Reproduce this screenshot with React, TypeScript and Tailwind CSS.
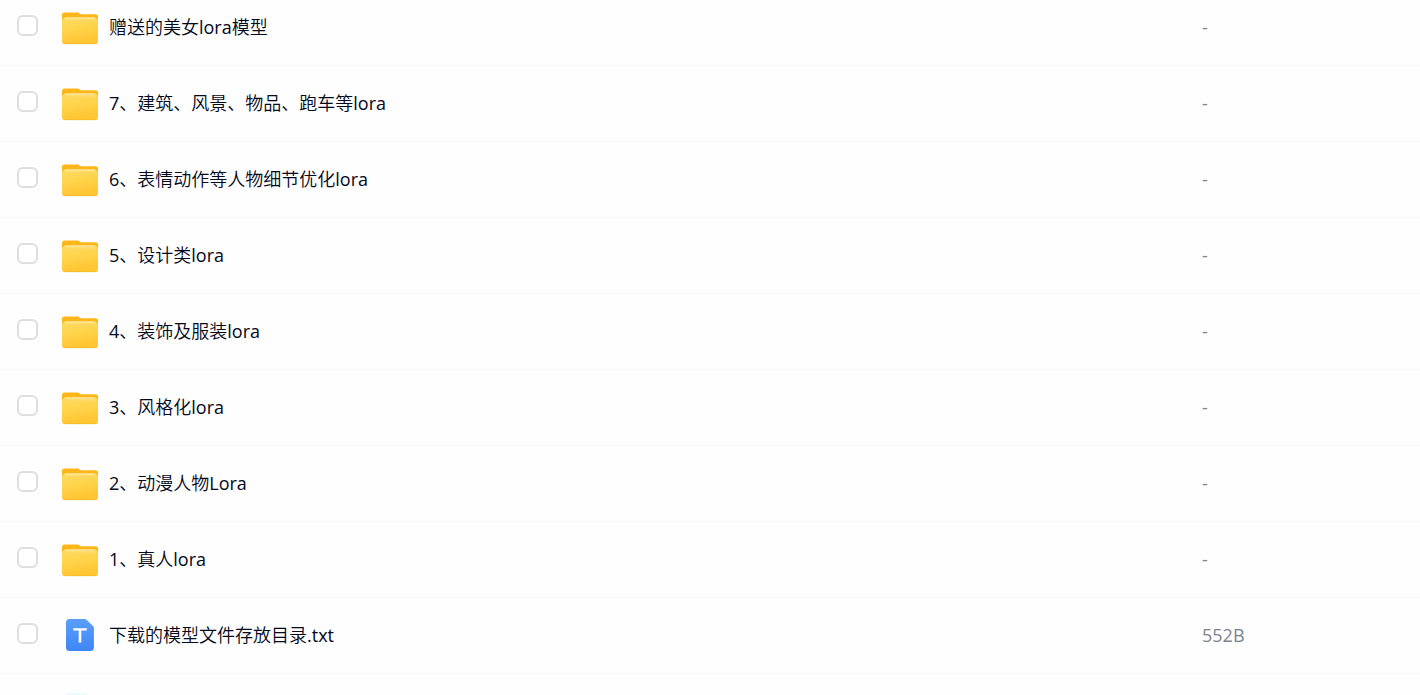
import React from "react";

type Kind = "folder" | "text" | "other";

interface Entry {
  id: string;
  name: string;
  size: string;
  kind: Kind;
}

const entries: Entry[] = [
  { id: "gift", name: "赠送的美女lora模型", size: "-", kind: "folder" },
  { id: "f7", name: "7、建筑、风景、物品、跑车等lora", size: "-", kind: "folder" },
  { id: "f6", name: "6、表情动作等人物细节优化lora", size: "-", kind: "folder" },
  { id: "f5", name: "5、设计类lora", size: "-", kind: "folder" },
  { id: "f4", name: "4、装饰及服装lora", size: "-", kind: "folder" },
  { id: "f3", name: "3、风格化lora", size: "-", kind: "folder" },
  { id: "f2", name: "2、动漫人物Lora", size: "-", kind: "folder" },
  { id: "f1", name: "1、真人lora", size: "-", kind: "folder" },
  { id: "txt", name: "下载的模型文件存放目录.txt", size: "552B", kind: "text" },
];

function FolderIcon() {
  return (
    <svg viewBox="0 0 40 40" className="size-10 shrink-0" aria-hidden="true">
      <defs>
        <linearGradient id="folder-front" x1="0" y1="0" x2="0.25" y2="1">
          <stop offset="0" stopColor="#ffdc62" />
          <stop offset="0.5" stopColor="#ffd34a" />
          <stop offset="1" stopColor="#fec532" />
        </linearGradient>
        <linearGradient id="folder-shine" x1="0" y1="0" x2="0" y2="1">
          <stop offset="0" stopColor="#ffe9a8" />
          <stop offset="1" stopColor="#ffdc62" stopOpacity="0" />
        </linearGradient>
      </defs>
      <path
        d="M2 7a2.500 2.500 0 0 1 2.500-2.500h13c.8 0 1.300.200 1.900.700l1.300 1h14.800A2.500 2.500 0 0 1 38 8.700V18H2z"
        fill="#fcb61a"
      />
      <path
        d="M2 14.500c0-3.600 1.600-5.200 4.600-5.200h26.800c3 0 4.600 1.600 4.600 5.200V33a3 3 0 0 1-3 3H5a3 3 0 0 1-3-3z"
        fill="url(#folder-front)"
      />
      <path
        d="M3.500 13.500c0-2.700 1.300-4 3.600-4h25.800c2.300 0 3.600 1.300 3.600 4z"
        fill="url(#folder-shine)"
      />
      <path d="M3 34.700c.6.800 1.200 1 2 1h30c.8 0 1.400-.2 2-1" fill="none" stroke="#f9b62b" strokeWidth="0.700" />
    </svg>
  );
}

function TextFileIcon() {
  return (
    <svg viewBox="0 0 40 40" className="size-10 shrink-0" aria-hidden="true">
      <defs>
        <linearGradient id="text-file" x1="0" y1="0" x2="0" y2="1">
          <stop offset="0" stopColor="#5b9efa" />
          <stop offset="1" stopColor="#3f86f6" />
        </linearGradient>
      </defs>
      <path
        d="M6 6.500A3.500 3.500 0 0 1 9.500 3h15.300c.8 0 1.500.3 2.100.9l6.100 6.200c.6.600.9 1.300.9 2.100v19.300a3.500 3.500 0 0 1-3.500 3.500H9.500A3.500 3.500 0 0 1 6 31.500z"
        fill="url(#text-file)"
      />
      <path d="M13.200 12.200h13.600v2.400H21.300v11.800h-2.600V14.600h-5.500z" fill="#ffffff" />
    </svg>
  );
}

function OtherFileIcon() {
  return (
    <svg viewBox="0 0 40 40" className="size-10 shrink-0" aria-hidden="true">
      <path d="M5 4a3 3 0 0 1 3-3h17l10 9v26a3 3 0 0 1-3 3H8a3 3 0 0 1-3-3z" fill="#eefbfb" />
    </svg>
  );
}

function EntryIcon({ kind }: { kind: Kind }) {
  if (kind === "folder") return <FolderIcon />;
  if (kind === "text") return <TextFileIcon />;
  return <OtherFileIcon />;
}

export default function App() {
  return (
    <main className="h-screen overflow-hidden bg-[#fefefe] font-['Open_Sans','Noto_Sans_CJK_SC_DemiLight','Noto_Sans_CJK_SC',sans-serif] text-[18px] leading-6 text-[#03081a]">
      <table className="-mt-2.5 w-full table-fixed border-separate border-spacing-0">
        <colgroup>
          <col className="w-15" />
          <col />
          <col className="w-[218px]" />
        </colgroup>
        <tbody>
          {entries.map((entry) => (
            <tr key={entry.id} className="h-19">
              <td className="border-b border-[#f7f7f8] p-0 pb-1 pl-[17px]">
                <input
                  id={entry.id}
                  type="checkbox"
                  className="block size-[21px] appearance-none rounded-md border-2 border-[#dedee0] bg-white checked:border-[#4f8ff7] checked:bg-[#4f8ff7]"
                />
              </td>
              <td className="border-b border-[#f7f7f8] p-0">
                <label htmlFor={entry.id} className="flex items-center gap-[9px]">
                  <EntryIcon kind={entry.kind} />
                  <span className="truncate pb-0.5 font-[380]">{entry.name}</span>
                </label>
              </td>
              <td className="border-b border-[#f7f7f8] p-0 pb-0.5 font-[380] text-[#7d828e]">{entry.size}</td>
            </tr>
          ))}
          <tr className="h-19" aria-hidden="true">
            <td className="p-0" />
            <td className="p-0">
              <EntryIcon kind="other" />
            </td>
            <td className="p-0" />
          </tr>
        </tbody>
      </table>
    </main>
  );
}
